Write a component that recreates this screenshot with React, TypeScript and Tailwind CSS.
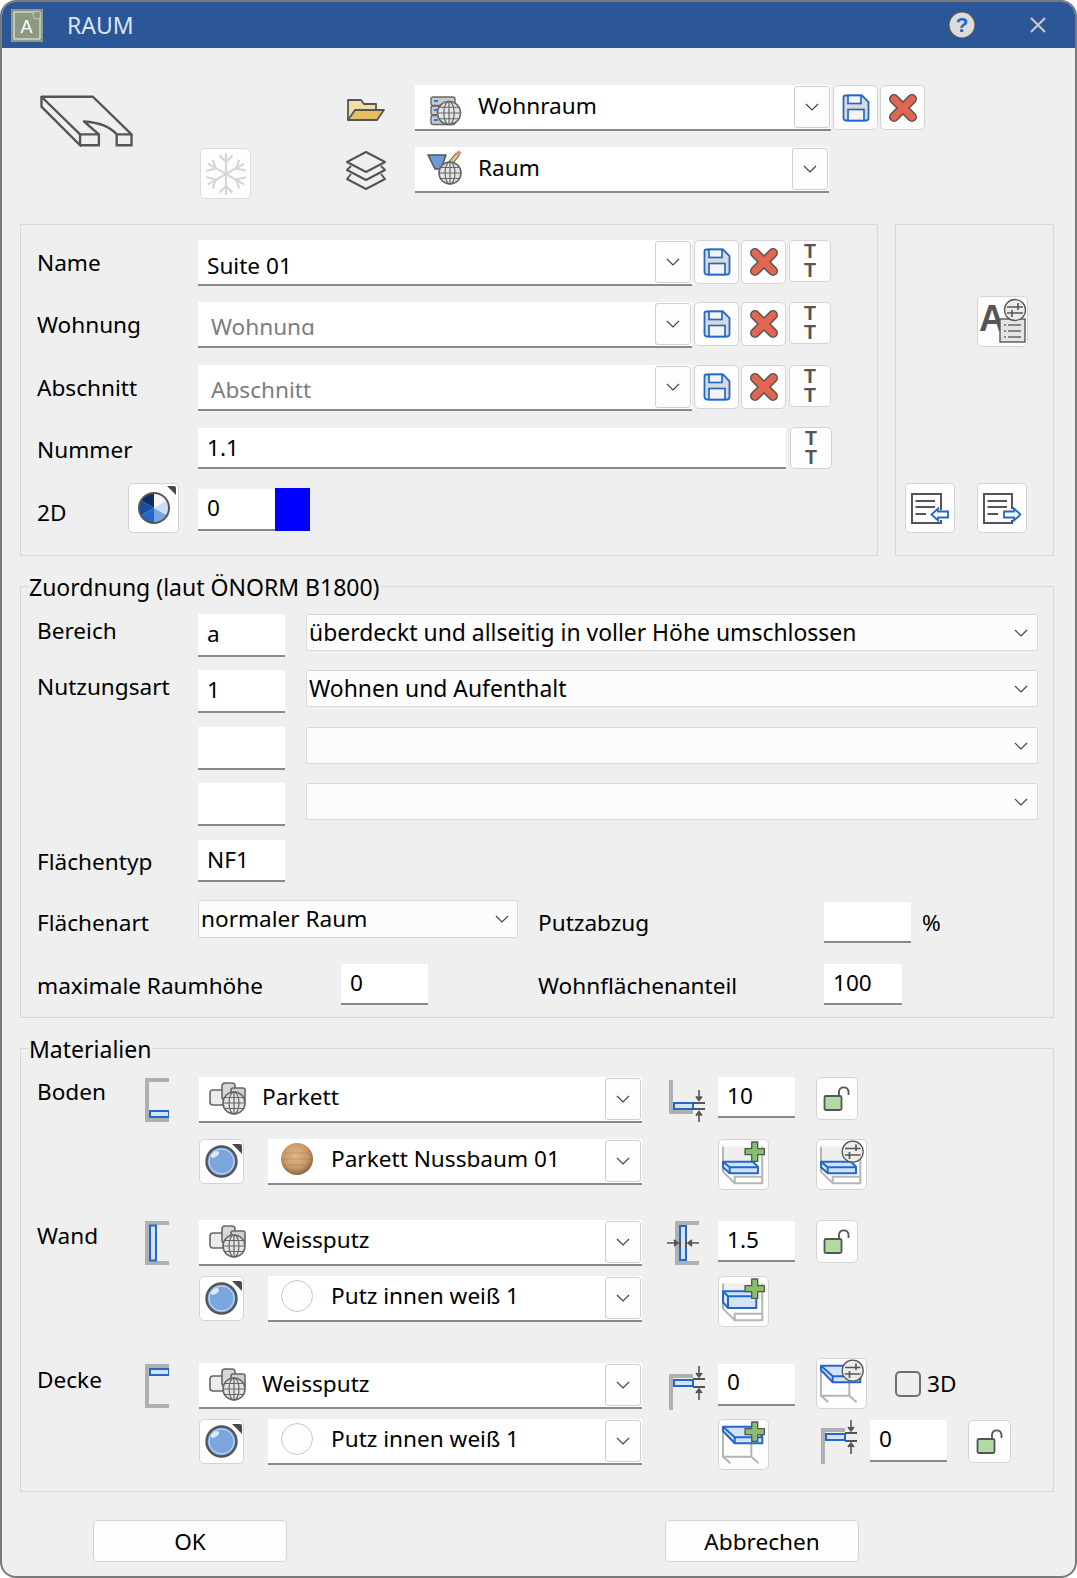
import React from "react";

const F = "font-['Noto_Sans','Open_Sans',sans-serif]";

function Globe({ x, y, r }: { x: number; y: number; r: number }) {
  return (
    <g stroke="#666" fill="none" strokeWidth={1.2}>
      <circle cx={x} cy={y} r={r} fill="#e4e4e4" strokeWidth={1.6} />
      <ellipse cx={x} cy={y} rx={r * 0.45} ry={r} />
      <path d={`M${x} ${y - r}V${y + r}M${x - r} ${y}H${x + r}M${x - r * 0.85} ${y - r * 0.5}H${x + r * 0.85}M${x - r * 0.85} ${y + r * 0.5}H${x + r * 0.85}`} />
    </g>
  );
}

function Chevron() {
  return (
    <svg width="14" height="8" viewBox="0 0 14 8">
      <path d="M1 1l6 6 6-6" fill="none" stroke="#444" strokeWidth="1.2" />
    </svg>
  );
}

function SaveIcon() {
  return (
    <svg width="28" height="28" viewBox="0 0 28 28">
      <path d="M3 1.500H20L26.500 8V24a2.500 2.500 0 0 1-2.500 2.500H4A2.500 2.500 0 0 1 1.500 24V3A1.500 1.500 0 0 1 3 1.500Z" fill="#dadada" stroke="#2268cc" strokeWidth="1.800" />
      <rect x="6" y="1.500" width="13" height="8" fill="#f4f4f4" stroke="#2268cc" strokeWidth="1.700" />
      <rect x="6" y="15.500" width="16" height="11" fill="#f4f4f4" stroke="#2268cc" strokeWidth="1.700" />
    </svg>
  );
}

function XIcon() {
  return (
    <svg width="30" height="30" viewBox="0 0 30 30">
      <path d="M6 6L24 24M24 6L6 24" fill="none" stroke="#555" strokeWidth="10" strokeLinecap="round" />
      <path d="M6 6L24 24M24 6L6 24" fill="none" stroke="#e26650" strokeWidth="7" strokeLinecap="round" />
    </svg>
  );
}

function LockIcon() {
  return (
    <svg width="28" height="28" viewBox="0 0 28 28">
      <path d="M16 11V6.500a4.800 4.800 0 0 1 9.500 0V10" fill="none" stroke="#555" strokeWidth="1.800" />
      <rect x="1.500" y="11" width="17" height="14" rx="1.500" fill="#b3dba1" stroke="#555" strokeWidth="1.800" />
    </svg>
  );
}

function Btn({ cls, children }: { cls: string; children?: React.ReactNode }) {
  return (
    <div className={`flex shrink-0 items-center justify-center rounded-[5px] border border-[#d4d4d4] bg-[#fdfdfd] ${cls}`}>
      {children}
    </div>
  );
}

function TTBtn() {
  return (
    <Btn cls="h-[42px] w-[42px] flex-col">
      <span className="font-['Liberation_Sans',sans-serif] text-[19.5px] leading-[19.500px] font-bold text-[#555]">T</span>
      <span className="font-['Liberation_Sans',sans-serif] text-[19.5px] leading-[19.500px] font-bold text-[#555]">T</span>
    </Btn>
  );
}

function Combo({ cls, icon, text, textCls, muted, clip }: { cls: string; icon?: React.ReactNode; text?: string; textCls: string; muted?: boolean; clip?: boolean }) {
  return (
    <div className={`flex shrink-0 items-start border-b-2 border-[#8a8a8a] bg-white ${cls}`}>
      {icon}
      <div className={`flex-1 self-stretch overflow-hidden ${textCls} ${muted ? "text-[#7d7d7d]" : "text-black"}`}>
        <div className={clip ? "h-[23px] overflow-hidden leading-[29px]" : "leading-[30px]"}>{text}</div>
      </div>
      <div className="mt-[1px] mr-[1px] flex h-[42px] w-[36px] shrink-0 items-center justify-center rounded-[3px] border border-[#cfcfcf] bg-[#fdfdfd]">
        <Chevron />
      </div>
    </div>
  );
}

function NameRow({ label, text, muted, clip, mt }: { label: string; text: string; muted?: boolean; clip?: boolean; mt: string }) {
  return (
    <div className={`flex ${mt}`}>
      <div className="mt-[8px] w-[161px] shrink-0 leading-[30px]">{label}</div>
      <Combo cls="h-[46px] w-[494px]" text={text} textCls={muted ? "pt-[10px] pl-[13px]" : "pt-[11px] pl-[9px]"} muted={muted} clip={clip} />
      <Btn cls="ml-[2px] h-[44px] w-[45px]"><SaveIcon /></Btn>
      <Btn cls="ml-[2px] h-[44px] w-[45px]"><XIcon /></Btn>
      <div className="ml-[3px]"><TTBtn /></div>
    </div>
  );
}

function Input({ cls, text, lead }: { cls: string; text?: string; lead?: string }) {
  return (
    <div className={`shrink-0 border-b-2 border-[#8a8a8a] bg-white pl-[9px] ${lead ?? "leading-[38px]"} ${cls}`}>{text}</div>
  );
}

function Select({ cls, text, chevCls }: { cls: string; text?: string; chevCls?: string }) {
  return (
    <div className={`flex shrink-0 items-center justify-between rounded-[2px] border border-[#d8d8d8] bg-[#fcfcfc] pl-[2px] leading-[36px] ${cls}`}>
      <span>{text}</span>
      <span className={`flex ${chevCls ?? "mr-[9px]"}`}><Chevron /></span>
    </div>
  );
}

function Legend({ text }: { text: string }) {
  return (
    <span className="absolute top-[-15px] left-[8px] bg-[#efefef] pr-[1px] text-[23px] leading-[30px]">{text}</span>
  );
}

function MatGlobe() {
  return (
    <svg width="40" height="34" viewBox="0 0 40 34" className="mt-[5px] ml-[10px] shrink-0">
      <rect x="1" y="8" width="15" height="15" rx="3" fill="#ececec" stroke="#666" strokeWidth="1.600" />
      <rect x="13" y="1" width="13" height="17" rx="3" fill="#d8d8d8" stroke="#666" strokeWidth="1.600" />
      <rect x="22" y="6" width="14" height="14" rx="2" fill="#cfcfcf" stroke="#666" strokeWidth="1.600" />
      <Globe x={25} y={21} r={11} />
    </svg>
  );
}

function MatBtn() {
  return (
    <Btn cls="h-[45px] w-[45px]">
      <svg width="45" height="45" viewBox="0 0 45 45" className="shrink-0">
        <path d="M33 5h8a2 2 0 0 1 2 2v8z" fill="#4a4a4a" />
        <circle cx="22.500" cy="22.500" r="15" fill="#7ba6dd" stroke="#555" strokeWidth="2.400" />
        <circle cx="22.500" cy="22.500" r="12.500" fill="none" stroke="#cfe0f5" strokeWidth="1" />
        <ellipse cx="16" cy="15.500" rx="4.500" ry="2.500" fill="#dce9f8" transform="rotate(-35 16 15.500)" />
      </svg>
    </Btn>
  );
}

function Sphere({ wood }: { wood?: boolean }) {
  return (
    <svg width="34" height="34" viewBox="0 0 34 34" className="mt-[3px] ml-[12px] shrink-0">
      <defs>
        <radialGradient id="wood" cx="45%" cy="40%" r="60%">
          <stop offset="0%" stopColor="#e2b98c" />
          <stop offset="65%" stopColor="#c99a68" />
          <stop offset="100%" stopColor="#8a6544" />
        </radialGradient>
      </defs>
      {wood ? (
        <g>
          <circle cx="17" cy="17" r="16" fill="url(#wood)" />
          <path d="M4 11H30M2 17H32M4 23H30" stroke="#a97c50" strokeWidth="0.800" opacity="0.600" />
        </g>
      ) : (
        <circle cx="17" cy="17" r="15.500" fill="#fdfdfd" stroke="#c8c8c8" strokeWidth="1" />
      )}
    </svg>
  );
}

function Bracket({ kind }: { kind: "floor" | "wall" | "ceil" }) {
  return (
    <svg width="24" height="44" viewBox="0 0 24 44" className="shrink-0">
      <path d="M24 2H2V42H24" fill="none" stroke="#b0b0b0" strokeWidth="4" />
      {kind === "floor" && <rect x="5" y="33" width="19" height="6" fill="#d3e2f5" stroke="#2268cc" strokeWidth="2" />}
      {kind === "wall" && <rect x="5" y="4.500" width="6" height="35" fill="#d3e2f5" stroke="#2268cc" strokeWidth="2" />}
      {kind === "ceil" && <rect x="5" y="5" width="19" height="6" fill="#d3e2f5" stroke="#2268cc" strokeWidth="2" />}
    </svg>
  );
}

function ThickFloor() {
  return (
    <svg width="36" height="42" viewBox="0 0 36 42" className="shrink-0">
      <path d="M2 0V32H24" fill="none" stroke="#b0b0b0" strokeWidth="4" />
      <rect x="5" y="23" width="19" height="6" fill="#d3e2f5" stroke="#2268cc" strokeWidth="2" />
      <path d="M24 23H36M24 29H36" stroke="#555" strokeWidth="2" />
      <path d="M30 10V21M27 16.500l3 4 3-4M30 42V31M27 35.500l3-4 3 4" fill="#555" stroke="#555" strokeWidth="1.600" />
    </svg>
  );
}

function ThickCeil({ cls }: { cls?: string }) {
  return (
    <svg width="36" height="44" viewBox="0 0 36 44" className={`shrink-0 ${cls ?? ""}`}>
      <path d="M2 44V10H24" fill="none" stroke="#b0b0b0" strokeWidth="4" />
      <rect x="5" y="14" width="19" height="6" fill="#d3e2f5" stroke="#2268cc" strokeWidth="2" />
      <path d="M24 13H36M24 21H36" stroke="#555" strokeWidth="2" />
      <path d="M30 0V11M27 7l3 4 3-4M30 34V23M27 27l3-4 3 4" fill="#555" stroke="#555" strokeWidth="1.600" />
    </svg>
  );
}

function ThickWall() {
  return (
    <svg width="38" height="44" viewBox="0 0 38 44" className="shrink-0">
      <path d="M32 2H10V42H32" fill="none" stroke="#b0b0b0" strokeWidth="4" />
      <rect x="13" y="5" width="6" height="34" fill="#d3e2f5" stroke="#2268cc" strokeWidth="2" />
      <path d="M13 18V27M19 18V27" stroke="#555" strokeWidth="2" />
      <path d="M0 22H11M7 19l4 3-4 3M32 22H21M25 19l-4 3 4 3" fill="#555" stroke="#555" strokeWidth="1.600" />
    </svg>
  );
}

function LayerBtn({ kind, mark, cls }: { kind: "floor" | "wall" | "ceil"; mark: "plus" | "slider"; cls?: string }) {
  return (
    <Btn cls={`h-[51px] w-[51px] ${cls ?? ""}`}>
      <svg width="51" height="51" viewBox="0 0 51 51" className="shrink-0">
        {kind === "ceil" ? (
          <path d="M5 12V37.700H33.300V24M5 37.700L12.300 44.300M33.300 37.700L40.700 44.300" fill="none" stroke="#b5b5b5" strokeWidth="2" />
        ) : (
          <g>
            <rect x="5" y="7.500" width="39.300" height="16" fill="#efefef" />
            <path d="M5 7.500V32.700L16.700 44.300H44.300V7.500" fill="none" stroke="#b5b5b5" strokeWidth="2" />
            <path d="M16.700 44.300V37.700H44.300" fill="none" stroke="#b5b5b5" strokeWidth="2" />
          </g>
        )}
        {kind === "floor" && (
          <g fill="#d3e2f5" stroke="#2268cc" strokeWidth="2" strokeLinejoin="round">
            <path d="M5 22.700H35L40 27.700V34.300H11.700L5 28.300Z" />
            <path d="M5 22.700L11.700 28.300H40M11.700 28.300V34.300" fill="none" />
          </g>
        )}
        {kind === "wall" && (
          <g fill="#d3e2f5" stroke="#2268cc" strokeWidth="2" strokeLinejoin="round">
            <path d="M5 15.300H38.300V32H10L5 26.300Z" />
            <path d="M5 15.300L10 20.300H38.300M10 20.300V32" fill="none" />
          </g>
        )}
        {kind === "ceil" && (
          <g fill="#d3e2f5" stroke="#2268cc" strokeWidth="2" strokeLinejoin="round">
            <path d="M5 7.700H33L44.300 17V24.300H16.700L5 12Z" />
            <path d="M5 7.700L16.700 18.300H44.300M16.700 18.300V24.300" fill="none" />
          </g>
        )}
        {mark === "plus" ? (
          <path d="M33.700 3H39.700V9.700H46.400V15.700H39.700V22.400H33.700V15.700H27V9.700H33.700Z" fill="#86c06c" stroke="#555" strokeWidth="1.300" strokeLinejoin="round" />
        ) : (
          <g>
            <circle cx="36.700" cy="12.700" r="10.500" fill="#ececec" stroke="#555" strokeWidth="1.300" />
            <path d="M29 9.500H44.500M29 16H44.500M40 5.500V12M33.500 13V20" stroke="#555" strokeWidth="1.700" fill="none" />
          </g>
        )}
      </svg>
    </Btn>
  );
}

export default function App() {
  return (
    <div className={`${F} box-border h-[1578px] w-[1077px] overflow-hidden rounded-[16px] border-2 border-[#7a7a7a] bg-[#efefef] text-[22.6px] text-black`}>
      <div className="flex h-[46px] items-center bg-[#2b5697] text-[23px]">
        <svg width="32" height="33" viewBox="0 0 32 33" className="ml-[9px] shrink-0">
          <rect width="32" height="33" fill="#8b9a80" />
          <path d="M27 3H3V30H29V8" fill="none" stroke="#f3f3f3" strokeWidth="1" />
          <text x="15.500" y="24" fontSize="18" fill="#fff" textAnchor="middle" fontFamily="Liberation Sans">A</text>
          <circle cx="26" cy="6" r="4" fill="#8b9a80" stroke="#d5d5d5" strokeWidth="0.800" />
        </svg>
        <span className="ml-[24px] text-[#dbe5f1]">RAUM</span>
        <svg width="28" height="28" viewBox="0 0 28 28" className="ml-[814px] shrink-0">
          <circle cx="14" cy="14" r="13" fill="#dcdcdc" stroke="#555" strokeWidth="1.200" />
          <text x="14" y="21" fontSize="21" fontWeight="700" fill="#1f66cc" textAnchor="middle" fontFamily="Liberation Sans">?</text>
        </svg>
        <svg width="16" height="16" viewBox="0 0 16 16" className="ml-[54px] shrink-0">
          <path d="M1 1L15 15M15 1L1 15" stroke="#c9c9c9" strokeWidth="2.200" />
        </svg>
      </div>

      <div className="flex h-[176px]">
        <svg width="93" height="52" viewBox="-1.500 -1.500 94 52" className="mt-[47px] ml-[38px] shrink-0">
          <path d="M0 0H52L91 38H76C70 31 58 26 43 25L58 38H39Z" fill="none" stroke="#555" strokeWidth="2.400" strokeLinejoin="round" />
          <path d="M0 0V10L39 49V38M39 49H58V38M76 38V49H91V38" fill="none" stroke="#555" strokeWidth="2.400" />
        </svg>
        <Btn cls="mt-[100px] ml-[67px] h-[51px] w-[51px] border-[#dcdcdc]">
          <svg width="46" height="46" viewBox="0 0 42 42" fill="none" stroke="#d6d6d6" strokeWidth="2" className="shrink-0">
            <path d="M21 2V40M4.500 11.500L37.500 30.500M37.500 11.500L4.500 30.500" />
            <path d="M15 4l6 6 6-6M15 38l6-6 6 6M3 18l8.500-2L9 8M39 24l-8.500 2L33 34M3 24l8.500 2L9 34M39 18l-8.500-2L33 8" />
          </svg>
        </Btn>
        <div className="mt-[37px] ml-[94px] flex flex-col">
          <div className="flex">
            <div className="flex h-[46px] w-[70px] shrink-0 items-start">
              <svg width="38" height="24" viewBox="0 0 38 24" className="mt-[13px] ml-[2px]">
                <path d="M1 22V2H14L17 6H29V12" fill="#f3dfa4" stroke="#555" strokeWidth="1.800" strokeLinejoin="round" />
                <path d="M1 22L8 12H37L30 22Z" fill="#e3bf63" stroke="#555" strokeWidth="1.800" strokeLinejoin="round" />
              </svg>
            </div>
            <Combo
              cls="h-[46px] w-[416px]"
              text="Wohnraum"
              textCls="pt-[6px] pl-[16px]"
              icon={
                <svg width="32" height="30" viewBox="0 0 32 30" className="mt-[11px] ml-[15px] shrink-0">
                  <rect x="1" y="1" width="24" height="8.500" rx="2" fill="#c9c9c9" stroke="#666" strokeWidth="1.400" />
                  <rect x="1" y="10" width="24" height="9" rx="2" fill="#c9c9c9" stroke="#666" strokeWidth="1.400" />
                  <rect x="1" y="19.500" width="24" height="9" rx="2" fill="#c9c9c9" stroke="#666" strokeWidth="1.400" />
                  <path d="M4 5h4M4 14h4M4 24h4" stroke="#2f7be0" strokeWidth="2" />
                  <Globe x={19} y={17} r={11.500} />
                </svg>
              }
            />
            <Btn cls="ml-[2px] h-[45px] w-[45px]"><SaveIcon /></Btn>
            <Btn cls="ml-[2px] h-[45px] w-[45px]"><XIcon /></Btn>
          </div>
          <div className="mt-[16px] flex">
            <div className="flex h-[46px] w-[70px] shrink-0 items-start">
              <svg width="42" height="40" viewBox="0 0 42 40" className="mt-[4px] ml-[0px]">
                <path d="M21 1L40 11 21 21 2 11Z" fill="none" stroke="#555" strokeWidth="2" strokeLinejoin="round" />
                <path d="M6 15L2 19 21 29 40 19 36 15" fill="none" stroke="#555" strokeWidth="2" strokeLinejoin="round" />
                <path d="M6 23L2 28 21 38 40 28 36 23" fill="none" stroke="#555" strokeWidth="2" strokeLinejoin="round" />
              </svg>
            </div>
            <Combo
              cls="h-[46px] w-[414px]"
              text="Raum"
              textCls="pt-[6px] pl-[15px]"
              icon={
                <svg width="36" height="36" viewBox="0 0 36 36" className="mt-[2px] ml-[12px] shrink-0">
                  <path d="M1 6H19L14 20 8 20Z" fill="#6a9ad8" stroke="#555" strokeWidth="1.500" strokeLinejoin="round" />
                  <path d="M20 18L31 5" stroke="#555" strokeWidth="5" />
                  <path d="M20 18L31 5" stroke="#e8c878" strokeWidth="3" />
                  <path d="M30 6L33 2.500" stroke="#d98a7a" strokeWidth="4" />
                  <Globe x={23} y={24} r={11} />
                </svg>
              }
            />
          </div>
        </div>
      </div>

      <div className="ml-[18px] flex h-[332px]">
        <div className="box-border h-full w-[858px] shrink-0 border border-[#d7d7d7] pl-[16px]">
          <NameRow mt="mt-[15px]" label="Name" text="Suite 01" />
          <NameRow mt="mt-[16px]" label="Wohnung" text="Wohnung" muted clip />
          <NameRow mt="mt-[17px]" label="Abschnitt" text="Abschnitt" muted />
          <div className="mt-[16px] flex">
            <div className="mt-[8px] w-[161px] shrink-0 leading-[30px]">Nummer</div>
            <div className="mt-[1px] h-[41px] w-[588px] shrink-0 border-b-2 border-[#8a8a8a] bg-white pl-[9px] leading-[40px]">1.1</div>
            <div className="ml-[4px]"><TTBtn /></div>
          </div>
          <div className="mt-[14px] flex">
            <div className="mt-[15px] w-[91px] shrink-0 leading-[30px]">2D</div>
            <Btn cls="h-[50px] w-[51px]">
              <svg width="48" height="48" viewBox="0 0 48 48" className="shrink-0">
                <path d="M37 2h7a2 2 0 0 1 2 2v7z" fill="#4a4a4a" />
                <circle cx="24" cy="24" r="15" fill="#fff" />
                <path d="M24 24V9A15 15 0 0 1 37 16.500Z" fill="#f4f7fb" />
                <path d="M24 24L37 16.500A15 15 0 0 1 37 31.500Z" fill="#cbddf4" />
                <path d="M24 24L37 31.500A15 15 0 0 1 24 39Z" fill="#7aa4de" />
                <path d="M24 24V39A15 15 0 0 1 11 31.500Z" fill="#2268cc" />
                <path d="M24 24L11 31.500A15 15 0 0 1 11 16.500Z" fill="#174f9e" />
                <path d="M24 24L11 16.500A15 15 0 0 1 24 9Z" fill="#0e2f63" />
                <circle cx="24" cy="24" r="15" fill="none" stroke="#555" strokeWidth="2" />
              </svg>
            </Btn>
            <div className="mt-[6px] ml-[19px] h-[42px] w-[77px] shrink-0 border-b-2 border-[#8a8a8a] bg-white pl-[9px] leading-[38px]">0</div>
            <div className="mt-[5px] h-[43px] w-[35px] shrink-0 bg-[#0000ff]" />
          </div>
        </div>
        <div className="ml-[17px] box-border flex h-full w-[159px] shrink-0 flex-col border border-[#d7d7d7] pl-[9px]">
          <div className="mt-[71px] ml-[72px]">
            <Btn cls="h-[51px] w-[51px]">
              <svg width="48" height="48" viewBox="0 0 48 48" className="shrink-0">
                <text x="0" y="33" fontSize="36" fontWeight="700" fill="#555" fontFamily="Liberation Sans">A</text>
                <rect x="21" y="21" width="25" height="23" fill="#e4e4e4" stroke="#555" strokeWidth="1.400" />
                <path d="M25 27h2M29 27h13M25 33h2M29 33h13M25 39h2M29 39h13" stroke="#666" strokeWidth="1.500" />
                <circle cx="36" cy="12" r="10.500" fill="#ececec" stroke="#555" strokeWidth="1.300" />
                <path d="M28 9H44M28 15H44M39 5V12M33 12V19" stroke="#555" strokeWidth="1.600" />
              </svg>
            </Btn>
          </div>
          <div className="mt-[136px] flex gap-[22px]">
            <Btn cls="h-[50px] w-[50px]">
              <svg width="38" height="31" viewBox="0 0 38 31" className="shrink-0">
                <path d="M30 17V1H1V30H30V27" fill="none" stroke="#555" strokeWidth="2" />
                <path d="M4.500 8H24M4.500 14H24M4.500 21H15" stroke="#555" strokeWidth="2" />
                <path d="M20.500 21.500L27 15.500V18.500H37V24.500H27V27.500Z" fill="#fff" stroke="#2268cc" strokeWidth="1.800" />
              </svg>
            </Btn>
            <Btn cls="h-[50px] w-[50px]">
              <svg width="38" height="31" viewBox="0 0 38 31" className="shrink-0">
                <path d="M29 16V1H1V30H29V27" fill="none" stroke="#555" strokeWidth="2" />
                <path d="M4.500 8H24M4.500 14H24M4.500 21H15" stroke="#555" strokeWidth="2" />
                <path d="M37.500 21.500L31 15.500V18.500H21V24.500H31V27.500Z" fill="#fff" stroke="#2268cc" strokeWidth="1.800" />
              </svg>
            </Btn>
          </div>
        </div>
      </div>

      <div className="relative mt-[30px] ml-[18px] box-border h-[432px] w-[1034px] border border-[#d7d7d7] pl-[16px]">
        <Legend text="Zuordnung (laut ÖNORM B1800)" />
        <div className="mt-[27px] flex">
          <div className="mt-[2px] w-[161px] shrink-0 leading-[30px]">Bereich</div>
          <Input cls="h-[43px] w-[87px]" text="a" lead="leading-[40px]" />
          <Select cls="ml-[21px] h-[37px] w-[732px] text-[22.9px]" text="überdeckt und allseitig in voller Höhe umschlossen" />
        </div>
        <div className="mt-[13px] flex">
          <div className="mt-[2px] w-[161px] shrink-0 leading-[30px]">Nutzungsart</div>
          <Input cls="h-[43px] w-[87px]" text="1" lead="leading-[40px]" />
          <Select cls="ml-[21px] h-[37px] w-[732px] text-[22.9px]" text="Wohnen und Aufenthalt" />
        </div>
        <div className="mt-[14px] flex pl-[161px]">
          <Input cls="h-[43px] w-[87px]" />
          <Select cls="ml-[21px] h-[37px] w-[732px]" />
        </div>
        <div className="mt-[13px] flex pl-[161px]">
          <Input cls="h-[43px] w-[87px]" />
          <Select cls="ml-[21px] h-[37px] w-[732px]" />
        </div>
        <div className="mt-[14px] flex">
          <div className="mt-[7px] w-[161px] shrink-0 leading-[30px]">Flächentyp</div>
          <Input cls="h-[42px] w-[87px]" text="NF1" lead="leading-[40px]" />
        </div>
        <div className="mt-[18px] flex">
          <div className="mt-[8px] w-[161px] shrink-0 leading-[30px]">Flächenart</div>
          <Select cls="h-[38px] w-[320px]" text="normaler Raum" chevCls="mr-[8px]" />
          <div className="mt-[8px] ml-[20px] w-[286px] shrink-0 leading-[30px]">Putzabzug</div>
          <Input cls="mt-[2px] h-[41px] w-[87px]" />
          <div className="mt-[8px] ml-[11px] leading-[30px]">%</div>
        </div>
        <div className="mt-[21px] flex">
          <div className="mt-[7px] w-[304px] shrink-0 leading-[30px]">maximale Raumhöhe</div>
          <Input cls="h-[41px] w-[87px]" text="0" />
          <div className="mt-[7px] ml-[110px] w-[286px] shrink-0 leading-[30px]">Wohnflächenanteil</div>
          <Input cls="h-[41px] w-[78px]" text="100" />
        </div>
      </div>

      <div className="relative mt-[30px] ml-[18px] box-border h-[444px] w-[1034px] border border-[#d7d7d7] pl-[16px]">
        <Legend text="Materialien" />
        <div className="mt-[28px] flex">
          <div className="mt-[0px] w-[108px] shrink-0 leading-[30px]">Boden</div>
          <div className="mt-[1px]"><Bracket kind="floor" /></div>
          <Combo cls="ml-[30px] h-[46px] w-[443px]" icon={<MatGlobe />} text="Parkett" textCls="pt-[5px] pl-[13px]" />
          <div className="mt-[3px] ml-[27px]"><ThickFloor /></div>
          <Input cls="ml-[13px] h-[41px] w-[77px]" text="10" />
          <Btn cls="ml-[21px] h-[43px] w-[42px]"><LockIcon /></Btn>
        </div>
        <div className="mt-[16px] flex pl-[162px]">
          <MatBtn />
          <Combo cls="ml-[24px] h-[46px] w-[374px]" icon={<Sphere wood />} text="Parkett Nussbaum 01" textCls="pt-[5px] pl-[17px]" />
          <LayerBtn kind="floor" mark="plus" cls="ml-[76px]" />
          <LayerBtn kind="floor" mark="slider" cls="ml-[47px]" />
        </div>
        <div className="mt-[30px] flex">
          <div className="mt-[1px] w-[108px] shrink-0 leading-[30px]">Wand</div>
          <div className="mt-[1px]"><Bracket kind="wall" /></div>
          <Combo cls="ml-[30px] h-[46px] w-[443px]" icon={<MatGlobe />} text="Weissputz" textCls="pt-[5px] pl-[13px]" />
          <div className="mt-[1px] ml-[25px]"><ThickWall /></div>
          <Input cls="mt-[1px] ml-[13px] h-[41px] w-[77px]" text="1.5" />
          <Btn cls="ml-[21px] h-[43px] w-[42px]"><LockIcon /></Btn>
        </div>
        <div className="mt-[10px] flex pl-[162px]">
          <MatBtn />
          <Combo cls="ml-[24px] h-[46px] w-[374px]" icon={<Sphere />} text="Putz innen weiß 1" textCls="pt-[5px] pl-[17px]" />
          <LayerBtn kind="wall" mark="plus" cls="ml-[76px]" />
        </div>
        <div className="mt-[36px] flex">
          <div className="mt-[2px] w-[108px] shrink-0 leading-[30px]">Decke</div>
          <div className="mt-[1px]"><Bracket kind="ceil" /></div>
          <Combo cls="ml-[30px] h-[46px] w-[443px]" icon={<MatGlobe />} text="Weissputz" textCls="pt-[6px] pl-[13px]" />
          <div className="mt-[3px] ml-[27px]"><ThickCeil /></div>
          <Input cls="mt-[1px] ml-[13px] h-[42px] w-[77px]" text="0" lead="leading-[36px]" />
          <LayerBtn kind="ceil" mark="slider" cls="mt-[-5px] ml-[21px]" />
          <div className="mt-[8px] ml-[28px] h-[26px] w-[26px] shrink-0 rounded-[5px] border-2 border-[#6f6f6f]" />
          <div className="mt-[6px] ml-[6px] leading-[30px]">3D</div>
        </div>
        <div className="mt-[9px] flex pl-[162px]">
          <MatBtn />
          <Combo cls="ml-[24px] h-[46px] w-[374px]" icon={<Sphere />} text="Putz innen weiß 1" textCls="pt-[5px] pl-[17px]" />
          <LayerBtn kind="ceil" mark="plus" cls="ml-[76px]" />
          <ThickCeil cls="mt-[1px] ml-[52px]" />
          <Input cls="mt-[1px] ml-[13px] h-[42px] w-[77px]" text="0" />
          <Btn cls="mt-[1px] ml-[21px] h-[43px] w-[43px]"><LockIcon /></Btn>
        </div>
      </div>

      <div className="mt-[28px] ml-[91px] flex">
        <Btn cls="h-[42px] w-[194px] pt-[2px]">OK</Btn>
        <Btn cls="ml-[378px] h-[42px] w-[194px] pt-[2px]">Abbrechen</Btn>
      </div>
    </div>
  );
}
